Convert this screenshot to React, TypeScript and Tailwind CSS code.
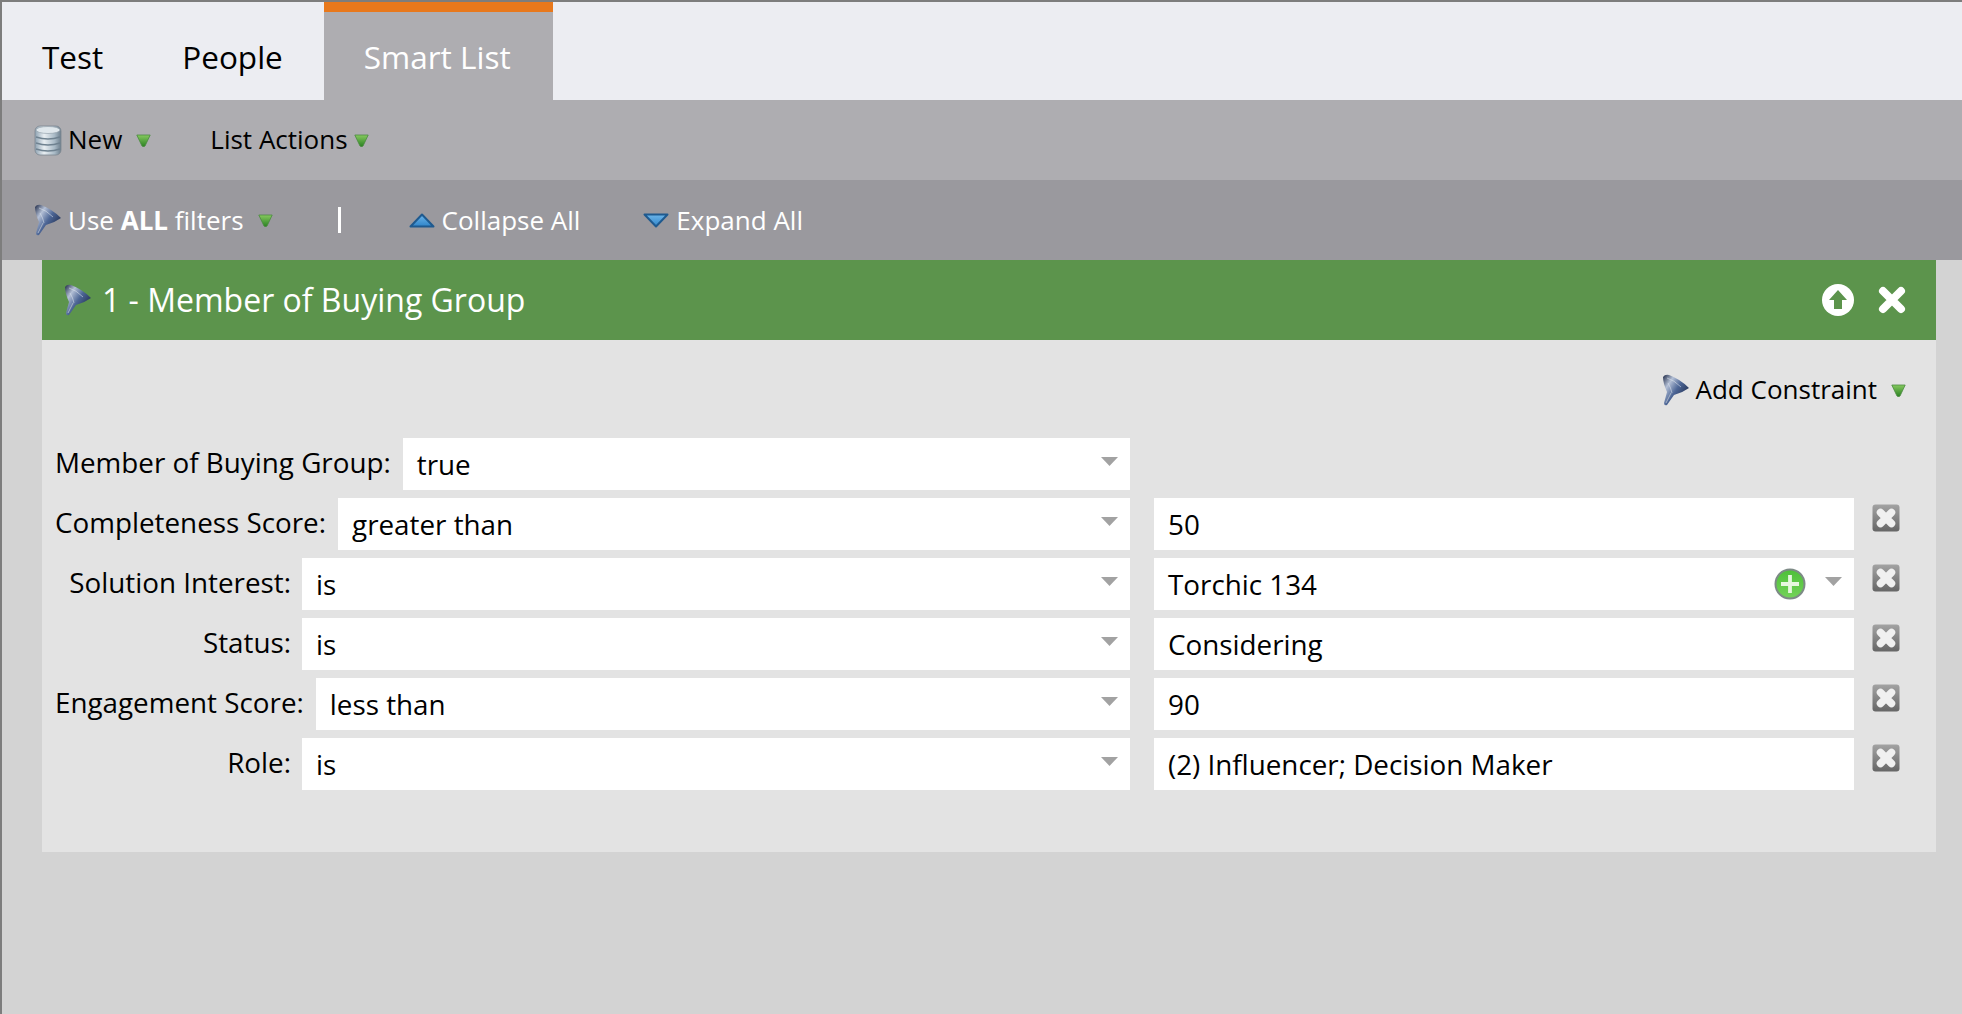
const rows = [
  { label: 'Member of Buying Group:', labelClass: 'mr-[12px]', op: 'true', value: '' },
  { label: 'Completeness Score:', labelClass: 'mr-[12px]', op: 'greater than', value: '50' },
  { label: 'Solution Interest:', labelClass: 'mr-[11px] min-w-[236px] text-right', op: 'is', value: 'Torchic 134', plus: true },
  { label: 'Status:', labelClass: 'mr-[11px] min-w-[236px] text-right', op: 'is', value: 'Considering' },
  { label: 'Engagement Score:', labelClass: 'mr-[12px]', op: 'less than', value: '90' },
  { label: 'Role:', labelClass: 'mr-[11px] min-w-[236px] text-right', op: 'is', value: '(2) Influencer; Decision Maker' },
];

function GreenArrow({ className = '' }: { className?: string }) {
  return (
    <svg width="15" height="13" viewBox="0 0 15 13" className={`shrink-0 ${className}`}>
      <defs>
        <linearGradient id="ga" x1="0" y1="0" x2="0" y2="1">
          <stop offset="0" stopColor="#86c95f" />
          <stop offset="1" stopColor="#2a8122" />
        </linearGradient>
      </defs>
      <path d="M0.8 1 L14.2 1 L9 12 Q7.5 13.4 6 12 Z" fill="url(#ga)" stroke="#4a8a40" strokeWidth="0.8" />
    </svg>
  );
}

function Funnel({ className = '' }: { className?: string }) {
  return (
    <svg width="28" height="32" viewBox="0 0 28 32" className={`shrink-0 ${className}`}>
      <defs>
        <linearGradient id="fn" x1="0" y1="0" x2="1" y2="0.8">
          <stop offset="0" stopColor="#1d2845" />
          <stop offset="0.28" stopColor="#b4c0d6" />
          <stop offset="0.55" stopColor="#4d6696" />
          <stop offset="1" stopColor="#16213f" />
        </linearGradient>
      </defs>
      <path d="M1 3 Q3 0 7 1 Q18 5 27 14 Q20 19 12 21 L5 31 Q2 32 2 29 L5 18 Q1 9 1 3 Z" fill="url(#fn)" />
      <path d="M5 4 Q12 6 19 13 M6 9 Q9 14 10 19" stroke="#dfe5ef" strokeWidth="1" fill="none" opacity="0.55" />
      <path d="M9 19 L4 29" stroke="#c3cad6" strokeWidth="1" fill="none" opacity="0.7" />
    </svg>
  );
}

function Database() {
  return (
    <svg width="28" height="31" viewBox="0 0 28 31" className="shrink-0">
      <defs>
        <linearGradient id="db" x1="0" y1="0" x2="1" y2="0">
          <stop offset="0" stopColor="#8fa3b3" />
          <stop offset="0.35" stopColor="#e8eef2" />
          <stop offset="0.75" stopColor="#a9bac6" />
          <stop offset="1" stopColor="#6d7f8d" />
        </linearGradient>
      </defs>
      <rect x="1" y="1" width="26" height="29" rx="5" fill="url(#db)" stroke="#7c8791" strokeWidth="0.8" />
      <ellipse cx="14" cy="5" rx="12" ry="3.5" fill="#dfe7ec" stroke="#8d9aa4" strokeWidth="0.6" />
      <path d="M2 12 Q14 16 26 12 M2 18 Q14 22 26 18 M2 24 Q14 28 26 24" stroke="#6f8290" strokeWidth="1.4" fill="none" />
    </svg>
  );
}

function BlueTriangle({ down = false }: { down?: boolean }) {
  return (
    <svg width="26" height="15" viewBox="0 0 26 15" className="shrink-0">
      <defs>
        <linearGradient id="bu" x1="0" y1="0" x2="0" y2="1">
          <stop offset="0" stopColor="#6db6ea" />
          <stop offset="1" stopColor="#2f84c9" />
        </linearGradient>
      </defs>
      {down ? (
        <path d="M1.5 1.5 H24.5 L13 13.5 Z" fill="url(#bu)" stroke="#1f5a8f" strokeWidth="2" strokeLinejoin="round" />
      ) : (
        <path d="M13 1.5 L24.5 13.5 H1.5 Z" fill="url(#bu)" stroke="#1f5a8f" strokeWidth="2" strokeLinejoin="round" />
      )}
    </svg>
  );
}

function Caret({ className = '' }: { className?: string }) {
  return (
    <svg width="17" height="9" viewBox="0 0 17 9" className={`shrink-0 mb-[5px] ${className}`}>
      <path d="M0 0 H17 L8.5 9 Z" fill="#a2a2a2" />
    </svg>
  );
}

function DeleteBox() {
  return (
    <svg width="28" height="28" viewBox="0 0 28 28" className="shrink-0">
      <defs>
        <linearGradient id="dx" x1="0" y1="0" x2="0" y2="1">
          <stop offset="0" stopColor="#a3a3a3" />
          <stop offset="1" stopColor="#666666" />
        </linearGradient>
      </defs>
      <rect x="0.5" y="0.5" width="27" height="27" rx="3" fill="url(#dx)" />
      <path d="M8.5 8.5 L19.5 19.5 M19.5 8.5 L8.5 19.5" stroke="#f0f0f0" strokeWidth="7.5" strokeLinecap="round" />
    </svg>
  );
}

function PlusCircle() {
  return (
    <svg width="32" height="32" viewBox="0 0 32 32" className="shrink-0">
      <defs>
        <linearGradient id="pc" x1="0" y1="0" x2="0" y2="1">
          <stop offset="0" stopColor="#4fc03a" />
          <stop offset="1" stopColor="#72d258" />
        </linearGradient>
      </defs>
      <circle cx="16" cy="16" r="15.5" fill="#7d8a86" />
      <circle cx="16" cy="16" r="13.5" fill="url(#pc)" />
      <path d="M16 7 V25 M7 16 H25" stroke="#e6f7df" strokeWidth="3.8" />
    </svg>
  );
}

function Select({ text, plus = false, caret = true, className = '' }: { text: string; plus?: boolean; caret?: boolean; className?: string }) {
  return (
    <div className={`h-[52px] bg-white flex items-center pl-[14px] pr-[12px] ${className}`}>
      <span className="flex-1 pt-[1px]">{text}</span>
      {plus ? <PlusCircle /> : null}
      {caret ? <Caret className={plus ? 'ml-[19px]' : ''} /> : null}
    </div>
  );
}

export default function App() {
  return (
    <div className="w-[1962px] h-[1014px] overflow-hidden flex flex-col bg-[#d3d3d3] border-t-2 border-l-2 border-[#7d7d7d] text-[27.8px] text-black font-['Open_Sans',sans-serif]">
      {/* tabs */}
      <div className="h-[98px] shrink-0 flex bg-[#ecedf2] text-[31.5px]">
        <div className="px-10 pt-[31px]">Test</div>
        <div className="pl-[39px] pr-[41px] pt-[31px]">People</div>
        <div className="w-[229px] px-10 pt-[21px] bg-[#aeadb1] text-white border-t-[10px] border-[#e8781c]">Smart List</div>
      </div>

      {/* list actions */}
      <div className="h-20 shrink-0 flex items-center bg-[#aeadb1] pl-[32px] text-[26px]">
        <Database />
        <span className="ml-[6px] mb-[2px]">New</span>
        <GreenArrow className="ml-[14px]" />
        <span className="ml-[59px] mb-[2px]">List Actions</span>
        <GreenArrow className="ml-[6px]" />
      </div>

      {/* filter toolbar */}
      <div className="h-20 shrink-0 flex items-center bg-[#9a999e] pl-[32px] text-white text-[26px]">
        <Funnel />
        <span className="ml-[6px]">Use <b>ALL</b> filters</span>
        <GreenArrow className="ml-[14px]" />
        <span className="ml-[65px] w-[3px] h-[26px] bg-white" />
        <span className="ml-[68px] flex items-center gap-[7px]">
          <BlueTriangle />
          Collapse All
        </span>
        <span className="ml-[63px] flex items-center gap-[7px]">
          <BlueTriangle down />
          Expand All
        </span>
      </div>

      {/* filter card */}
      <div className="ml-10 w-[1894px] flex flex-col">
        <div className="h-20 flex items-center bg-[#5c944c] pl-[22px] pr-[29px] text-white text-[32px]">
          <Funnel />
          <span className="ml-[10px] flex-1">1 - Member of Buying Group</span>
          <svg width="32" height="32" viewBox="0 0 32 32" className="shrink-0">
            <circle cx="16" cy="16" r="16" fill="#fff" />
            <path d="M16 6 L25 16 H20 V25 H12 V16 H7 Z" fill="#5c944c" />
          </svg>
          <svg width="30" height="30" viewBox="0 0 30 30" className="shrink-0 ml-[23px]">
            <path d="M6 6 L24 24 M24 6 L6 24" stroke="#fff" strokeWidth="8" strokeLinecap="round" />
          </svg>
        </div>

        <div className="bg-[#e3e3e3] pl-[13px] pb-[62px]">
          <div className="h-[98px] flex items-start justify-end pr-[30px] pt-[34px] text-[26px]">
            <Funnel />
            <span className="ml-[6px] leading-[30px]">Add Constraint</span>
            <GreenArrow className="ml-[14px] mt-[10px]" />
          </div>

          <div className="flex flex-col gap-2">
            {rows.map((row) => (
              <div key={row.label} className="flex items-start">
                <div className="w-[1075px] flex items-center">
                  <span className={`whitespace-nowrap mb-[2px] ${row.labelClass}`}>{row.label}</span>
                  <Select text={row.op} className="flex-1" />
                </div>
                {row.value ? (
                  <>
                    <Select text={row.value} plus={row.plus} caret={!!row.plus} className="ml-[24px] w-[700px]" />
                    <div className="ml-[18px] mt-[6px]">
                      <DeleteBox />
                    </div>
                  </>
                ) : null}
              </div>
            ))}
          </div>
        </div>
      </div>
    </div>
  );
}
